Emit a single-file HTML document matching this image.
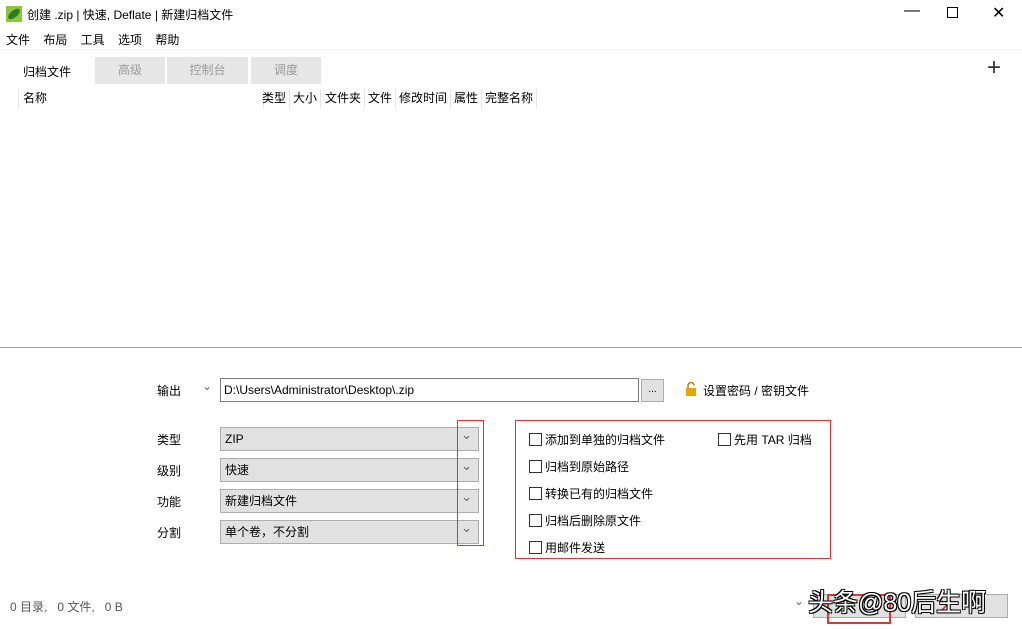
<!DOCTYPE html>
<html><head><meta charset="utf-8"><style>
body{margin:0;width:1022px;height:629px;background:#fff;font-family:"Liberation Sans","Noto Sans CJK SC",sans-serif;font-size:12px;color:#000;position:relative;overflow:hidden}
.a{position:absolute;white-space:nowrap}
.sel{position:absolute;left:220px;width:259px;height:24px;background:#e1e1e1;border:1px solid #adadad;box-sizing:border-box;line-height:22px;padding-left:4px}
.sel:after{content:"⌄";position:absolute;right:6px;top:-4px;color:#666;font-size:13px}
.cb{display:inline-block;width:11px;height:11px;border:1px solid #333;vertical-align:-2px;margin-right:3px;background:#fff}
.btn{position:absolute;top:594px;height:24px;width:93px;background:#e1e1e1;border:1px solid #adadad;box-sizing:border-box}
.tab{position:absolute;top:57px;height:27px;background:#e6e6e6;color:#9a9a9a;text-align:center;line-height:27px}
.h{position:absolute;top:89px;color:#000;border-right:1px solid #e5e5e5;height:20px}
</style></head><body>
<svg class="a" style="left:6px;top:6px" width="16" height="16"><rect width="16" height="16" fill="#8cc63f"/><ellipse cx="8" cy="8" rx="7" ry="3.5" transform="rotate(-40 8 8)" fill="#2e7d1e"/></svg>
<div class="a" style="left:27px;top:6px">创建 .zip | 快速, Deflate | 新建归档文件</div>
<div class="a" style="left:904px;top:2px;font-size:16px">—</div>
<div class="a" style="left:947px;top:7px;width:9px;height:9px;border:1px solid #000"></div>
<div class="a" style="left:992px;top:3px;font-size:16px">✕</div>
<div class="a" style="left:6px;top:31px">文件&nbsp;&nbsp;&nbsp;&nbsp;布局&nbsp;&nbsp;&nbsp;&nbsp;工具&nbsp;&nbsp;&nbsp;&nbsp;选项&nbsp;&nbsp;&nbsp;&nbsp;帮助</div>
<div class="a" style="left:0;top:49px;width:1022px;height:1px;background:#f0f0f0"></div>
<div class="a" style="left:23px;top:63px">归档文件</div>
<div class="tab" style="left:95px;width:70px">高级</div>
<div class="tab" style="left:167px;width:81px">控制台</div>
<div class="tab" style="left:251px;width:70px">调度</div>
<div class="a" style="left:987px;top:54px;font-size:24px;font-weight:300;color:#333">+</div>
<div class="h" style="left:18px;width:240px;padding-left:4px;border-left:1px solid #e5e5e5">名称</div>
<div class="h" style="left:262px">类型&nbsp;</div>
<div class="h" style="left:293px">大小&nbsp;</div>
<div class="h" style="left:325px">文件夹&nbsp;</div>
<div class="h" style="left:368px">文件&nbsp;</div>
<div class="h" style="left:399px">修改时间&nbsp;</div>
<div class="h" style="left:454px">属性&nbsp;</div>
<div class="h" style="left:485px">完整名称&nbsp;</div>
<div class="a" style="left:0;top:347px;width:1022px;height:1px;background:#a0a0a0"></div>
<div class="a" style="left:157px;top:382px">输出</div>
<div class="a" style="left:202px;top:379px;color:#666">⌄</div>
<div class="a" style="left:220px;top:378px;width:419px;height:24px;border:1px solid #7a7a7a;box-sizing:border-box;line-height:22px;padding-left:3px">D:\Users\Administrator\Desktop\.zip</div>
<div class="a" style="left:641px;top:379px;width:23px;height:23px;background:#e1e1e1;border:1px solid #adadad;box-sizing:border-box;text-align:center;line-height:20px;font-size:10px">...</div>
<svg class="a" style="left:685px;top:382px" width="12" height="14"><path d="M3 6V3.5a3 3 0 0 1 6 0" fill="none" stroke="#b08000" stroke-width="1.5"/><rect x="1" y="6" width="10" height="8" fill="#e0a800"/></svg>
<div class="a" style="left:703px;top:382px">设置密码 / 密钥文件</div>
<div class="a" style="left:157px;top:431px">类型</div>
<div class="a" style="left:157px;top:462px">级别</div>
<div class="a" style="left:157px;top:493px">功能</div>
<div class="a" style="left:157px;top:524px">分割</div>
<div class="sel" style="top:427px">ZIP</div>
<div class="sel" style="top:458px">快速</div>
<div class="sel" style="top:489px">新建归档文件</div>
<div class="sel" style="top:520px">单个卷，不分割</div>
<div class="a" style="left:457px;top:420px;width:27px;height:126px;border:1px solid #d9383a;box-sizing:border-box"></div>
<div class="a" style="left:515px;top:420px;width:316px;height:139px;border:1px solid #d9383a;box-sizing:border-box"></div>
<div class="a" style="left:529px;top:431px"><span class="cb"></span>添加到单独的归档文件</div>
<div class="a" style="left:718px;top:431px"><span class="cb"></span>先用 TAR 归档</div>
<div class="a" style="left:529px;top:458px"><span class="cb"></span>归档到原始路径</div>
<div class="a" style="left:529px;top:485px"><span class="cb"></span>转换已有的归档文件</div>
<div class="a" style="left:529px;top:512px"><span class="cb"></span>归档后删除原文件</div>
<div class="a" style="left:529px;top:539px"><span class="cb"></span>用邮件发送</div>
<div class="a" style="left:10px;top:598px;color:#555">0 目录,&nbsp;&nbsp; 0 文件,&nbsp;&nbsp; 0 B</div>
<div class="a" style="left:794px;top:594px;color:#666">⌄</div>
<div class="btn" style="left:813px"></div>
<div class="btn" style="left:915px"></div>
<div class="a" style="left:939px;top:596px;color:#d9383a;font-size:18px">✕</div>
<div class="a" style="left:827px;top:594px;width:64px;height:30px;border:2px solid #d9383a;box-sizing:border-box"></div>
<div class="a" style="left:808px;top:583px;font-size:25px;color:#fff;text-shadow:-1px -1px 0 #000,1px -1px 0 #000,-1px 1px 0 #000,1px 1px 0 #000">头条@80后生啊</div>
</body></html>
